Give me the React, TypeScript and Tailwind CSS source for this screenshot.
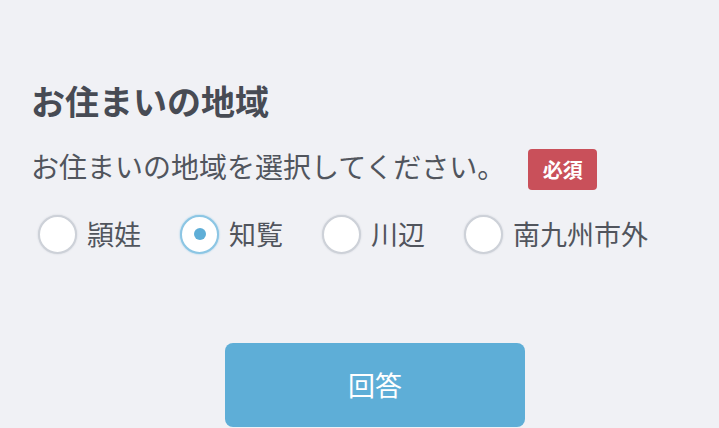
import { useState } from "react";

const areas = ["頴娃", "知覧", "川辺", "南九州市外"];

const font = { fontFamily: '"Noto Sans CJK JP", "Noto Sans", sans-serif' };

const Radio = ({ checked }: { checked: boolean }) => (
  <span
    className={`flex h-[39px] w-[39px] shrink-0 items-center justify-center rounded-full bg-white ${
      checked
        ? "border-2 border-[#8cc6e4] shadow-[0_0_2px_#8cc6e4]"
        : "border-2 border-[#cdd1d8] shadow-[0_0_2px_#cdd1d8]"
    }`}
  >
    {checked && <span className="h-[12px] w-[12px] rounded-full bg-[#5eaed7]" />}
  </span>
);

export default function App() {
  const [value, setValue] = useState("知覧");

  return (
    <div className="h-[428px] w-[719px] overflow-hidden bg-[#f0f1f5] pl-[31px]" style={font}>
      <h2 className="pt-[77px] text-[34px] font-bold leading-[48px] text-[#474b54]">
        お住まいの地域
      </h2>
      <div className="mt-[22px] flex items-start">
        <p className="text-[28px] leading-[38px] text-[#51555d]">
          お住まいの地域を選択してください。
        </p>
        <span className="ml-[23px] mt-[2px] flex h-[41px] w-[69px] items-center justify-center rounded-[4px] bg-[#c9505a] text-[20px] font-bold text-white">
          必須
        </span>
      </div>
      <div className="mt-[24px] flex items-center pl-[7px]">
        {areas.map((area) => (
          <label
            key={area}
            className="mr-[39px] flex cursor-pointer items-center gap-[10px]"
            onClick={() => setValue(area)}
          >
            <Radio checked={value === area} />
            <span className="text-[27px] leading-[40px] text-[#51555d]">{area}</span>
          </label>
        ))}
      </div>
      <div className="mt-[89px] flex justify-center">
        <button className="h-[84px] w-[300px] rounded-[8px] bg-[#5eaed7] text-[27px] text-white">
          回答
        </button>
      </div>
    </div>
  );
}
